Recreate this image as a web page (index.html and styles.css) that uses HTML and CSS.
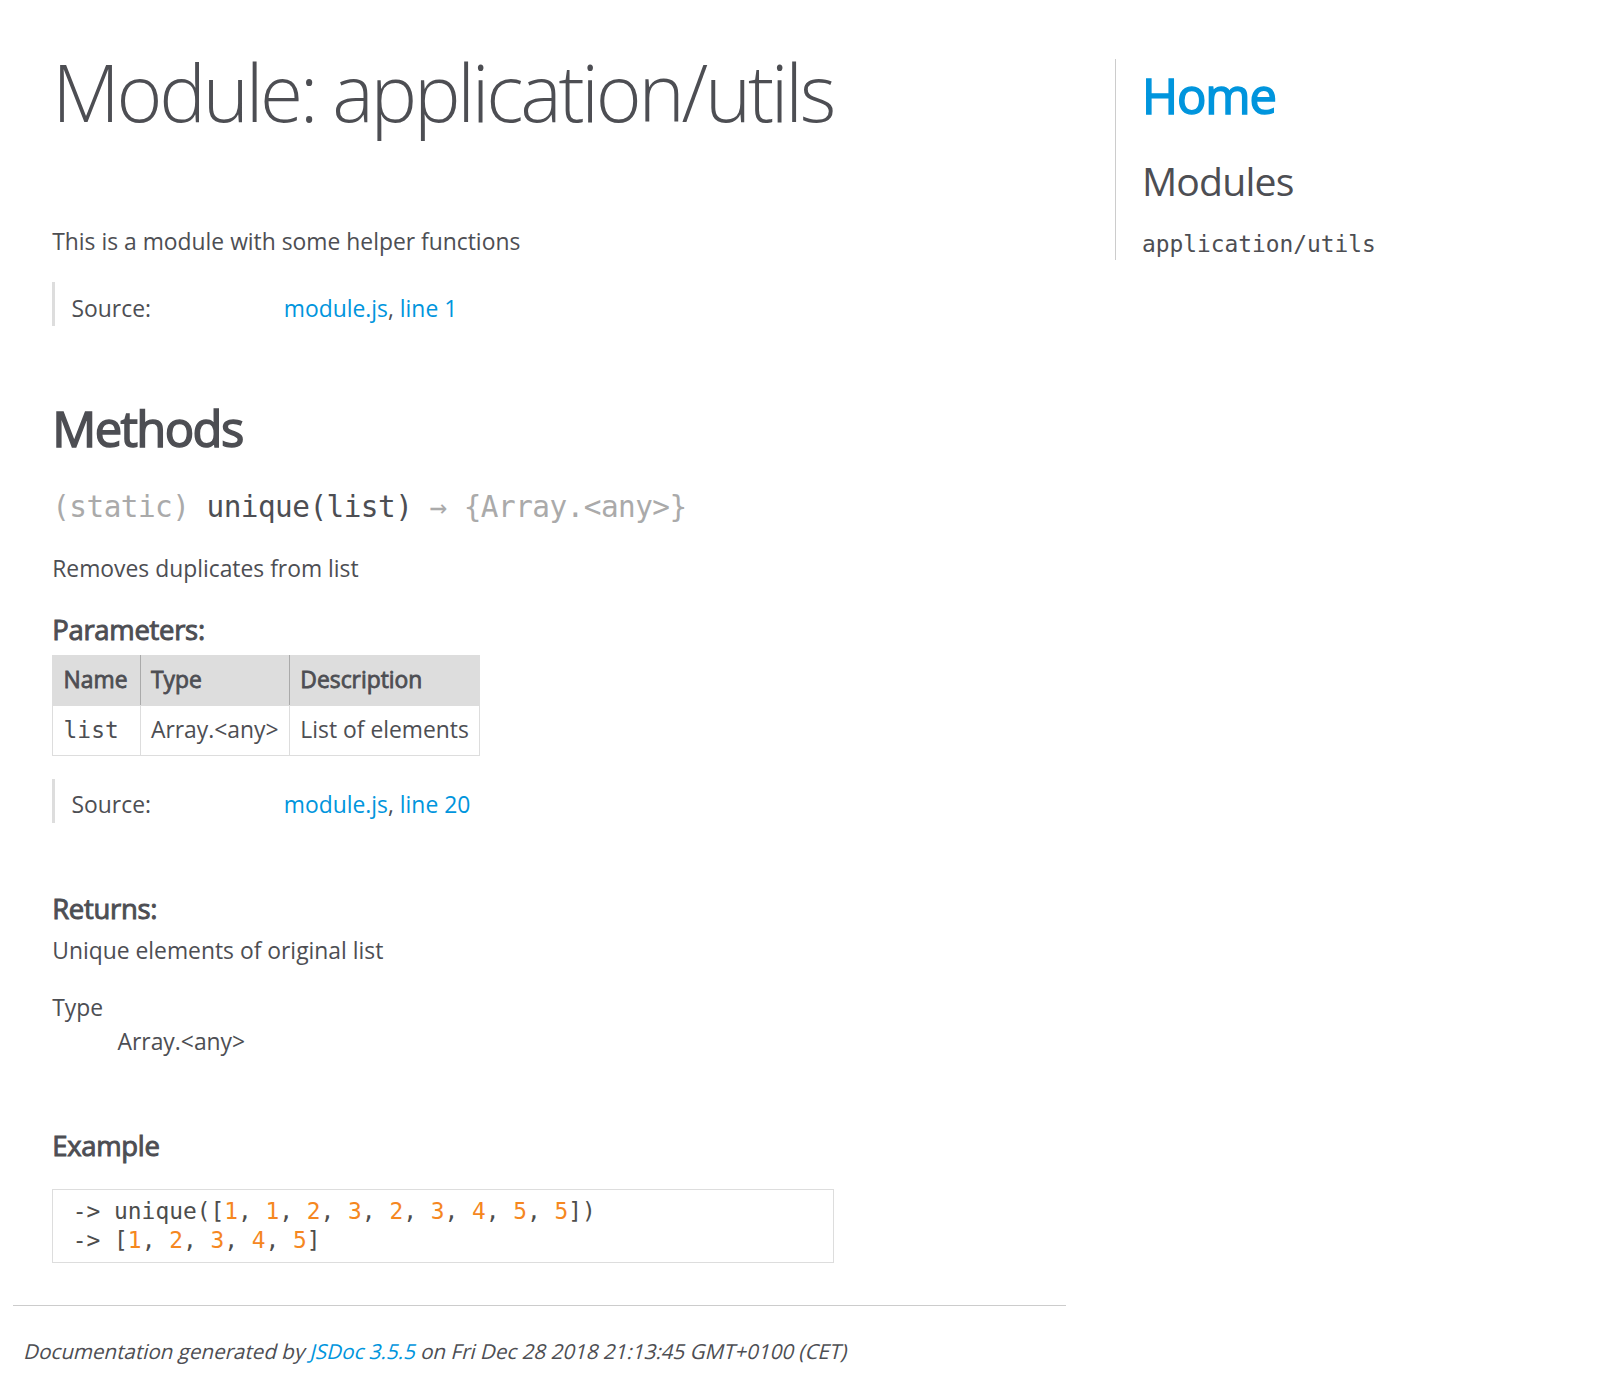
FILE: index.html
```html
<!DOCTYPE html>
<html lang="en">
<head>
<meta charset="utf-8">
<title>JSDoc: Module: application/utils</title>
<link rel="stylesheet" href="styles.css">
</head>
<body>
<div id="main">
  <h1 class="page-title">Module: application/utils</h1>
  <section>
    <header></header>
    <article>
      <div class="container-overview">
        <div class="description">This is a module with some helper functions</div>
        <dl class="details">
          <dt class="tag-source">Source:</dt>
          <dd class="tag-source"><ul class="dummy"><li><a href="#">module.js</a>, <a href="#">line 1</a></li></ul></dd>
        </dl>
      </div>

      <h3 class="subsection-title">Methods</h3>

      <h4 class="name"><span class="type-signature">(static) </span>unique<span class="signature">(list)</span><span class="type-signature"> &rarr; {Array.&lt;any&gt;}</span></h4>

      <div class="description">Removes duplicates from list</div>

      <h5>Parameters:</h5>
      <table class="params">
        <thead>
          <tr><th>Name</th><th>Type</th><th class="last">Description</th></tr>
        </thead>
        <tbody>
          <tr>
            <td class="name"><code>list</code></td>
            <td class="type"><span class="param-type">Array.&lt;any&gt;</span></td>
            <td class="description last">List of elements</td>
          </tr>
        </tbody>
      </table>

      <dl class="details">
        <dt class="tag-source">Source:</dt>
        <dd class="tag-source"><ul class="dummy"><li><a href="#">module.js</a>, <a href="#">line 20</a></li></ul></dd>
      </dl>

      <h5>Returns:</h5>
      <div class="param-desc">Unique elements of original list</div>
      <dl class="return-type">
        <dt>Type</dt>
        <dd><span class="param-type">Array.&lt;any&gt;</span></dd>
      </dl>

      <h5>Example</h5>
      <pre class="prettyprint"><code><span class="pun">-&gt;</span> <span class="pln">unique</span><span class="pun">([</span><span class="lit">1</span><span class="pun">,</span> <span class="lit">1</span><span class="pun">,</span> <span class="lit">2</span><span class="pun">,</span> <span class="lit">3</span><span class="pun">,</span> <span class="lit">2</span><span class="pun">,</span> <span class="lit">3</span><span class="pun">,</span> <span class="lit">4</span><span class="pun">,</span> <span class="lit">5</span><span class="pun">,</span> <span class="lit">5</span><span class="pun">])</span>
<span class="pun">-&gt;</span> <span class="pun">[</span><span class="lit">1</span><span class="pun">,</span> <span class="lit">2</span><span class="pun">,</span> <span class="lit">3</span><span class="pun">,</span> <span class="lit">4</span><span class="pun">,</span> <span class="lit">5</span><span class="pun">]</span></code></pre>
    </article>
  </section>
</div>

<nav>
  <h2><a href="#">Home</a></h2>
  <h3>Modules</h3>
  <ul><li><a href="#">application/utils</a></li></ul>
</nav>

<br class="clear">

<footer>
  <span class="footer-text">Documentation generated by <a href="#">JSDoc 3.5.5</a> on Fri Dec 28 2018 21:13:45 GMT+0100 (CET)</span>
</footer>
</body>
</html>
```
FILE: styles.css
```css
html {
  background-color: #fff;
  font-size: 22.86px;
}

body {
  margin: 13.06px;
  font-family: "Open Sans", "Noto Sans", sans-serif;
  font-size: 22.86px;
  line-height: 1.5;
  color: #4d4e53;
  background-color: #fff;
}

a, a:visited, a:active {
  color: #0095dd;
  text-decoration: none;
}

header {
  display: block;
  padding: 0 6.53px;
}

code, tt, kbd, samp {
  font-family: "DejaVu Sans Mono", "Liberation Mono", monospace;
}

#main {
  float: left;
  width: 70%;
}

article dl {
  margin-bottom: 65.31px;
}

section {
  display: block;
  background-color: #fff;
  padding: 19.59px 39.18px;
  border-bottom: 1px solid #ccc;
  margin-right: 48.98px;
}

nav {
  display: block;
  float: right;
  margin-top: 45.72px;
  width: 30%;
  box-sizing: border-box;
  border-left: 1px solid #ccc;
  padding-left: 26.12px;
}

nav ul {
  font-size: 100%;
  line-height: 27.76px;
  padding: 0;
  margin: 0;
  list-style-type: none;
}

nav ul a, nav ul a:visited, nav ul a:active {
  font-family: "DejaVu Sans Mono", "Liberation Mono", monospace;
  line-height: 29.39px;
  color: #4d4e53;
}

nav h3 {
  margin-top: 19.59px;
}

nav li {
  margin-top: 9.8px;
}

nav h2 a {
  -webkit-text-stroke: 1.5px #0095dd;
  letter-spacing: -1.1px;
}

footer {
  display: block;
  padding: 9.8px;
  margin-top: 19.59px;
  font-size: 90%;
}

.footer-text {
  display: inline-block;
  transform: skewX(-14deg);
  transform-origin: 0 75%;
}

.clear {
  clear: both;
}

h1, h2, h3, h4 {
  font-weight: 400;
  margin: 0;
}

h1 {
  font-weight: 300;
  font-size: 78.37px;
  letter-spacing: -3.27px;
  margin: 19.59px 39.18px 32.65px;
}

h2, h3.subsection-title {
  font-size: 48.98px;
  font-weight: 400;
  -webkit-text-stroke: 1.5px #4d4e53;
  letter-spacing: -1.63px;
  margin-bottom: 19.59px;
}

h3 {
  font-size: 39.18px;
  letter-spacing: -0.82px;
  margin-bottom: 19.59px;
}

h4 {
  font-size: 29.39px;
  letter-spacing: -0.54px;
  margin-bottom: 19.59px;
  color: #4d4e53;
}

h5 {
  font-size: 120%;
  font-weight: 400;
  -webkit-text-stroke: 0.95px #4d4e53;
  letter-spacing: -0.01em;
  margin: 13.06px 0 4.9px 0;
}

table {
  border-spacing: 0;
  border: 0;
  border-collapse: collapse;
}

td, th {
  border: 1px solid #ddd;
  margin: 0;
  text-align: left;
  vertical-align: top;
  padding: 7.3px 10.4px;
}

thead tr {
  background-color: #ddd;
}

th {
  font-weight: 400;
  -webkit-text-stroke: 0.8px #4d4e53;
  border-right: 1px solid #aaa;
}

th:first-child {
  padding-right: 12px;
}

tr > th:last-child {
  border-right: 1px solid #ddd;
}

.type-signature {
  color: #aaa;
}

.name, .signature {
  font-family: "DejaVu Sans Mono", "Liberation Mono", monospace;
}

.details {
  margin-top: 22.86px;
  border-left: 3.27px solid #ddd;
}

.details dt {
  width: 195.92px;
  float: left;
  padding-left: 16.33px;
  padding-top: 9.8px;
}

.details dd {
  margin-left: 114.29px;
}

.details ul {
  margin: 0;
  padding-left: 65.31px;
  list-style-type: none;
}

.details li {
  margin-left: 48.98px;
  padding-top: 9.8px;
}

.description {
  margin-bottom: 1em;
  margin-top: 1em;
}

.return-type dd {
  margin-left: 65.31px;
}

.params .name, .params .name code {
  color: #4d4e53;
  font-family: "DejaVu Sans Mono", "Liberation Mono", monospace;
  font-size: 100%;
}

.prettyprint {
  border: 1px solid #ddd;
  width: 80%;
  overflow: auto;
  margin: 1em 0;
}

.prettyprint code {
  font-size: 100%;
  line-height: 29.39px;
  display: block;
  padding: 6.53px 19.59px;
  margin: 0;
  background-color: #fff;
  color: #4d4e53;
}

.prettyprint .pln { color: #4d4d4c; }
.prettyprint .pun { color: #4d4d4c; }
.prettyprint .lit { color: #f5871f; }
```
